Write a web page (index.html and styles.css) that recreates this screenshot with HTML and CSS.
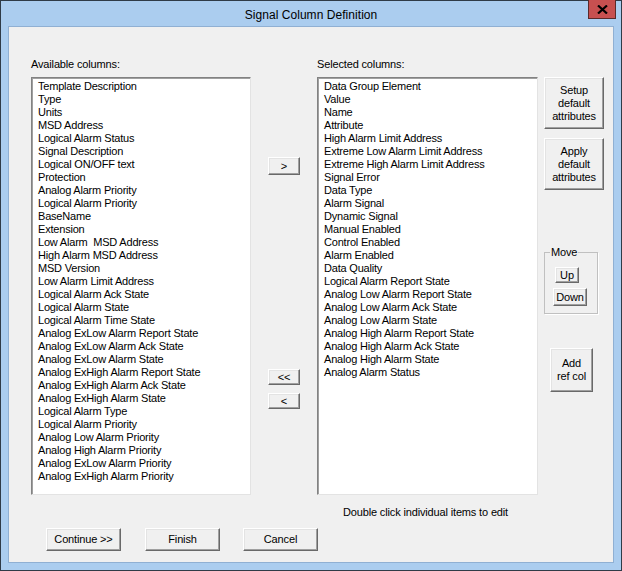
FILE: index.html
```html
<!DOCTYPE html>
<html>
<head>
<meta charset="utf-8">
<title>Signal Column Definition</title>
<link rel="stylesheet" href="styles.css">
</head>
<body>
<div class="window">
  <div class="titlebar">
    <span class="title">Signal Column Definition</span>
    <button class="close" aria-label="Close">
      <svg width="11" height="9" viewBox="0 0 11 9"><path d="M1 0.5 L10 8.5 M10 0.5 L1 8.5" stroke="#000" stroke-width="2.2"/></svg>
    </button>
  </div>
  <div class="client">
    <div class="main">
      <div class="col-list left-col">
        <div class="label">Available columns:</div>
        <ul class="listbox">
          <li>Template Description</li>
          <li>Type</li>
          <li>Units</li>
          <li>MSD Address</li>
          <li>Logical Alarm Status</li>
          <li>Signal Description</li>
          <li>Logical ON/OFF text</li>
          <li>Protection</li>
          <li>Analog Alarm Priority</li>
          <li>Logical Alarm Priority</li>
          <li>BaseName</li>
          <li>Extension</li>
          <li>Low Alarm&nbsp; MSD Address</li>
          <li>High Alarm MSD Address</li>
          <li>MSD Version</li>
          <li>Low Alarm Limit Address</li>
          <li>Logical Alarm Ack State</li>
          <li>Logical Alarm State</li>
          <li>Logical Alarm Time State</li>
          <li>Analog ExLow Alarm Report State</li>
          <li>Analog ExLow Alarm Ack State</li>
          <li>Analog ExLow Alarm State</li>
          <li>Analog ExHigh Alarm Report State</li>
          <li>Analog ExHigh Alarm Ack State</li>
          <li>Analog ExHigh Alarm State</li>
          <li>Logical Alarm Type</li>
          <li>Logical Alarm Priority</li>
          <li>Analog Low Alarm Priority</li>
          <li>Analog High Alarm Priority</li>
          <li>Analog ExLow Alarm Priority</li>
          <li>Analog ExHigh Alarm Priority</li>
        </ul>
      </div>
      <div class="mid-col">
        <button class="btn arrow add-one">&gt;</button>
        <button class="btn arrow remove-all">&lt;&lt;</button>
        <button class="btn arrow remove-one">&lt;</button>
      </div>
      <div class="col-list right-col">
        <div class="label">Selected columns:</div>
        <ul class="listbox">
          <li>Data Group Element</li>
          <li>Value</li>
          <li>Name</li>
          <li>Attribute</li>
          <li>High Alarm Limit Address</li>
          <li>Extreme Low Alarm Limit Address</li>
          <li>Extreme High Alarm Limit Address</li>
          <li>Signal Error</li>
          <li>Data Type</li>
          <li>Alarm Signal</li>
          <li>Dynamic Signal</li>
          <li>Manual Enabled</li>
          <li>Control Enabled</li>
          <li>Alarm Enabled</li>
          <li>Data Quality</li>
          <li>Logical Alarm Report State</li>
          <li>Analog Low Alarm Report State</li>
          <li>Analog Low Alarm Ack State</li>
          <li>Analog Low Alarm State</li>
          <li>Analog High Alarm Report State</li>
          <li>Analog High Alarm Ack State</li>
          <li>Analog High Alarm State</li>
          <li>Analog Alarm Status</li>
        </ul>
        <div class="hint">Double click individual items to edit</div>
      </div>
      <div class="side-col">
        <button class="btn tall">Setup<br>default<br>attributes</button>
        <button class="btn tall apply">Apply<br>default<br>attributes</button>
        <fieldset class="move">
          <legend>Move</legend>
          <button class="btn up">Up</button>
          <button class="btn down">Down</button>
        </fieldset>
        <button class="btn addref">Add<br>ref col</button>
      </div>
    </div>
    <div class="footer">
      <button class="btn foot continue">Continue &gt;&gt;</button>
      <button class="btn foot finish">Finish</button>
      <button class="btn foot cancel">Cancel</button>
    </div>
  </div>
</div>
</body>
</html>
```

FILE: styles.css
```css
* { box-sizing: border-box; }
html, body { margin: 0; padding: 0; }
body {
  width: 622px;
  height: 571px;
  overflow: hidden;
  font-family: "Liberation Sans", Arial, sans-serif;
  font-size: 11px;
  color: #000;
}
.window {
  width: 622px;
  height: 571px;
  background: #abcdef;
  border: 1px solid #2f3b47;
  display: flex;
  flex-direction: column;
  padding: 0 7px 7px 7px;
}
.titlebar {
  height: 25px;
  flex: none;
  position: relative;
  display: flex;
  align-items: center;
  justify-content: center;
}
.title {
  font-size: 12px;
  letter-spacing: 0.05px;
  color: #000;
  margin-top: 2px;
}
.close {
  position: absolute;
  top: -1px;
  right: -2px;
  width: 28px;
  height: 19px;
  background: #c75050;
  border: 1px solid #5a2a2a;
  border-top: none;
  padding: 0;
  display: flex;
  align-items: center;
  justify-content: center;
}
.client {
  flex: 1;
  background: #f0f0f0;
  border: 1px solid #90b0d3;
  display: flex;
  flex-direction: column;
}
.main {
  display: flex;
  padding-left: 22px;
  padding-top: 31px;
}
.label {
  height: 19px;
  line-height: 13px;
  letter-spacing: -0.15px;
}
.listbox {
  list-style: none;
  margin: 0;
  background: #fff;
  height: 418px;
  border-top: 1px solid #828282;
  border-left: 1px solid #828282;
  border-right: 1px solid #e3e3e3;
  border-bottom: 1px solid #e3e3e3;
  box-shadow: inset 1px 1px 0 #a0a0a0;
  padding: 2px 0 0 6px;
  overflow: hidden;
}
.listbox li {
  height: 13px;
  line-height: 13px;
  white-space: nowrap;
  letter-spacing: -0.2px;
}
.left-col { width: 220px; }
.right-col { width: 221px; margin-left: 17px; }
.mid-col {
  width: 32px;
  margin-left: 17px;
  display: flex;
  flex-direction: column;
  padding-top: 99px;
}
.btn {
  font-family: "Liberation Sans", Arial, sans-serif;
  font-size: 11px;
  letter-spacing: -0.15px;
  color: #000;
  background: #f0f0f0;
  border-top: 1px solid #fff;
  border-left: 1px solid #fff;
  border-right: 1px solid #696969;
  border-bottom: 1px solid #696969;
  box-shadow: inset -1px -1px 0 #a0a0a0, inset 1px 1px 0 #e3e3e3;
  padding: 0;
  line-height: 13px;
}
.arrow { width: 32px; height: 18px; }
.remove-all { margin-top: 194px; height: 16px; }
.remove-one { margin-top: 8px; height: 16px; }
.hint {
  margin-top: 11px;
  padding-left: 26px;
  line-height: 13px;
  letter-spacing: -0.15px;
  white-space: nowrap;
}
.side-col {
  width: 60px;
  margin-left: 6px;
  padding-top: 19px;
  display: flex;
  flex-direction: column;
  align-items: flex-start;
}
.tall { width: 60px; height: 52px; }
.apply { margin-top: 9px; }
.move {
  margin: 57px 0 0 0;
  width: 54px;
  height: 67px;
  border: 1px solid #c0c0c0;
  box-shadow: 1px 1px 0 #fff;
  padding: 0;
  display: flex;
  flex-direction: column;
  align-items: flex-start;
  position: relative;
}
.move legend {
  padding: 0 1px;
  margin-left: 5px;
  line-height: 11px;
  letter-spacing: -0.15px;
}
.up { width: 24px; height: 16px; margin: 9px 0 0 10px; }
.down { width: 34px; height: 18px; margin: 5px 0 0 8px; }
.addref {
  width: 43px;
  height: 44px;
  margin: 34px 0 0 6px;
}
.footer {
  display: flex;
  padding-left: 37px;
  margin-top: 9px;
}
.foot { width: 75px; height: 23px; }
.finish { margin-left: 24px; }
.cancel { margin-left: 23px; }
```
